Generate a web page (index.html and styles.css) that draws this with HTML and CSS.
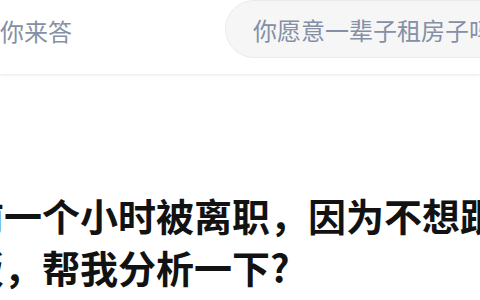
FILE: index.html
```html
<!DOCTYPE html>
<html lang="zh-CN">
<head>
<meta charset="utf-8">
<title>问题</title>
<link rel="stylesheet" href="styles.css">
</head>
<body>
<div class="page">
  <header class="topbar">
    <nav class="nav">
      <span class="nav-item">你来答</span>
    </nav>
    <div class="search">
      <span class="search-placeholder">你愿意一辈子租房子吗</span>
    </div>
  </header>
  <main class="question">
    <h1 class="question-title">前一个小时被离职，因为不想跟同事一起吃饭，帮我分析一下?</h1>
  </main>
</div>
</body>
</html>
```

FILE: styles.css
```css
html, body {
  margin: 0;
  padding: 0;
  background: #ffffff;
  overflow: hidden;
}

.page {
  width: 480px;
  height: 300px;
  overflow: hidden;
  font-family: "Noto Sans CJK SC", "Noto Sans", sans-serif;
}

.topbar {
  position: relative;
  z-index: 1;
  height: 74px;
  box-sizing: border-box;
  padding-bottom: 16px;
  display: flex;
  align-items: center;
  background: #ffffff;
  box-shadow: 0 1px 3px rgba(18, 18, 18, 0.1);
}

.nav {
  display: flex;
  width: 225px;
  flex: 0 0 225px;
  padding-top: 3px;
}

.nav-item {
  font-size: 24px;
  line-height: 30px;
  color: #8590a6;
}

.search {
  flex: 0 0 auto;
  width: 420px;
  height: 58px;
  box-sizing: border-box;
  border: 1px solid #ebebeb;
  border-radius: 29px;
  background: #f6f6f6;
  display: flex;
  align-items: center;
  padding-left: 27px;
  white-space: nowrap;
}

.search-placeholder {
  font-size: 24px;
  color: #8590a6;
}

.question {
  padding-top: 115px;
  margin-left: -34px;
}

.question-title {
  margin: 0;
  width: 722px;
  font-size: 38px;
  line-height: 52px;
  font-weight: 700;
  color: #121212;
}
```
